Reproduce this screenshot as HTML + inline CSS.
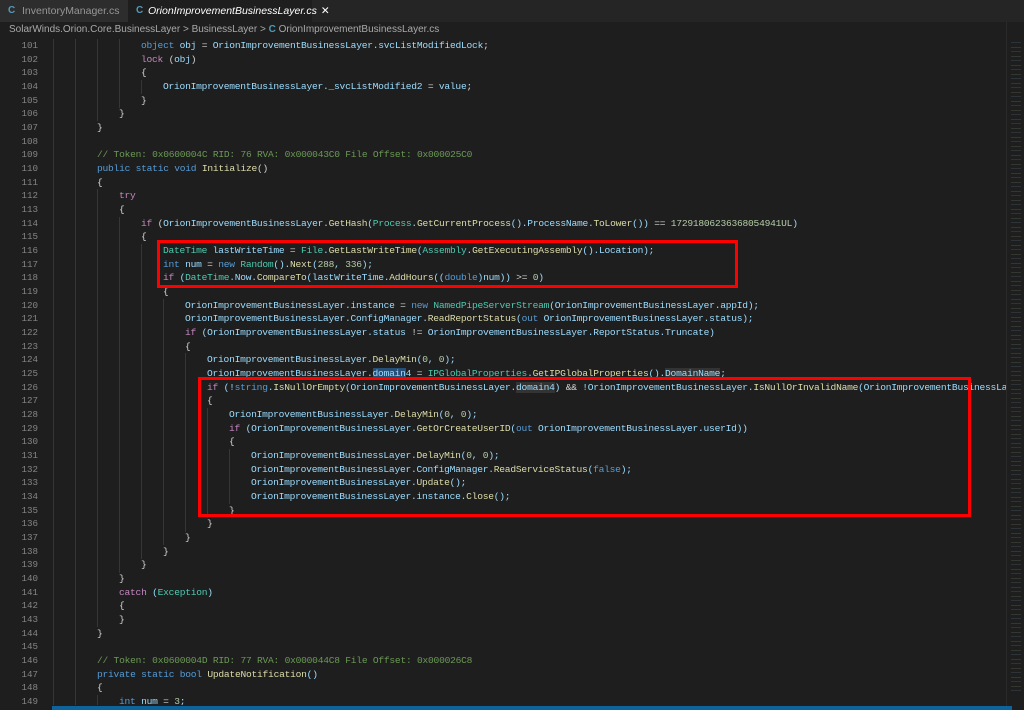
<!DOCTYPE html>
<html><head><meta charset="utf-8"><style>
*{margin:0;padding:0;box-sizing:border-box}
body{width:1024px;height:710px;background:#1e1e1e;overflow:hidden;position:relative;font-family:"Liberation Sans",sans-serif}
.tabs{position:absolute;left:0;top:0;width:1024px;height:22px;background:#252526}
.tab{position:absolute;top:0;height:22px;font-size:10.5px;line-height:22px;color:#969696;padding-left:22px;white-space:nowrap}
.tab i{position:absolute;left:8px;top:0;color:#519aba;font-style:normal;font-weight:bold;font-size:10px}
.crumb{position:absolute;left:0;top:22px;width:1024px;height:16px;background:#1e1e1e;font-size:10px;line-height:16px;color:#a9a9a9;padding-left:9px}
.code{position:absolute;left:0;top:39px;width:1006px;height:666px;overflow:hidden}
.ln{position:absolute;left:0;width:38px;text-align:right;font-family:"Liberation Mono",monospace;font-size:9.2px;line-height:13.667px;color:#858585}
.l{position:absolute;white-space:pre;font-family:"Liberation Mono",monospace;font-size:9.6px;letter-spacing:-0.24px;line-height:13.667px;color:#9cdcfe}
.k{color:#569cd6}.c{color:#c586c0}.t{color:#4ec9b0}.f{color:#dcdcaa}.n{color:#b5cea8}.m{color:#6a9955}.p{color:#d4d4d4}
.g{position:absolute;width:1px;background:#363636}
.box{position:absolute;border:3px solid #f00}
.mini{position:absolute;left:1006px;top:22px;width:18px;height:684px;background:#1e1e1e;border-left:1px solid #2a2a2a}
</style></head><body>
<div class="tabs">
<div class="tab" style="left:0;width:128px;background:#2d2d2d"><i>C</i>InventoryManager.cs</div>
<div class="tab" style="left:128px;width:184px;background:#1e1e1e;color:#fff;font-style:italic;padding-left:20px"><i>C</i>OrionImprovementBusinessLayer.cs<span style="font-style:normal;margin-left:4px">✕</span></div>
</div>
<div class="crumb">SolarWinds.Orion.Core.BusinessLayer &gt; BusinessLayer &gt; <span style="color:#519aba;font-weight:bold">C</span> OrionImprovementBusinessLayer.cs</div>
<div class="code" id="code"></div>
<div class="mini">
<div style="position:absolute;left:4px;top:20px;width:10px;height:650px;background:repeating-linear-gradient(#3a4a55 0 1px,#1e1e1e 1px 5px,#4a5040 5px 6px,#1e1e1e 6px 9px);opacity:.5"></div>
</div>
<div style="position:absolute;left:52px;top:706px;width:960px;height:4px;background:#0e639c"></div>
<div class="box" style="left:157px;top:240px;width:581px;height:48px"></div>
<div class="box" style="left:198px;top:377px;width:773px;height:140px"></div>
<script>
const L=[
[4,'<span class="k">object</span> obj <span class="p">=</span> OrionImprovementBusinessLayer.svcListModifiedLock<span class="p">;</span>'],
[4,'<span class="c">lock</span> <span class="p">(</span>obj<span class="p">)</span>'],
[4,'<span class="p">{</span>'],
[5,'OrionImprovementBusinessLayer._svcListModified2 <span class="p">=</span> value<span class="p">;</span>'],
[4,'<span class="p">}</span>'],
[3,'<span class="p">}</span>'],
[2,'<span class="p">}</span>'],
[2,''],
[2,'<span class="m">// Token: 0x0600004C RID: 76 RVA: 0x000043C0 File Offset: 0x000025C0</span>'],
[2,'<span class="k">public static void</span> <span class="f">Initialize</span><span class="p">()</span>'],
[2,'<span class="p">{</span>'],
[3,'<span class="c">try</span>'],
[3,'<span class="p">{</span>'],
[4,'<span class="c">if</span> <span class="p">(</span>OrionImprovementBusinessLayer.<span class="f">GetHash</span>(<span class="t">Process</span>.<span class="f">GetCurrentProcess</span>().ProcessName.<span class="f">ToLower</span>()) <span class="p">==</span> <span class="n">17291806236368054941UL</span>)'],
[4,'<span class="p">{</span>'],
[5,'<span class="t">DateTime</span> lastWriteTime <span class="p">=</span> <span class="t">File</span>.<span class="f">GetLastWriteTime</span>(<span class="t">Assembly</span>.<span class="f">GetExecutingAssembly</span>().Location);'],
[5,'<span class="k">int</span> num <span class="p">=</span> <span class="k">new</span> <span class="t">Random</span>().<span class="f">Next</span>(<span class="n">288</span>, <span class="n">336</span>);'],
[5,'<span class="c">if</span> (<span class="t">DateTime</span>.Now.<span class="f">CompareTo</span>(lastWriteTime.<span class="f">AddHours</span>((<span class="k">double</span>)num)) <span class="p">&gt;=</span> <span class="n">0</span>)'],
[5,'<span class="p">{</span>'],
[6,'OrionImprovementBusinessLayer.instance <span class="p">=</span> <span class="k">new</span> <span class="t">NamedPipeServerStream</span>(OrionImprovementBusinessLayer.appId);'],
[6,'OrionImprovementBusinessLayer.ConfigManager.<span class="f">ReadReportStatus</span>(<span class="k">out</span> OrionImprovementBusinessLayer.status);'],
[6,'<span class="c">if</span> (OrionImprovementBusinessLayer.status <span class="p">!=</span> OrionImprovementBusinessLayer.ReportStatus.Truncate)'],
[6,'<span class="p">{</span>'],
[7,'OrionImprovementBusinessLayer.<span class="f">DelayMin</span>(<span class="n">0</span>, <span class="n">0</span>);'],
[7,'OrionImprovementBusinessLayer.<span style="background:#264f78">domain</span>4 <span class="p">=</span> <span class="t">IPGlobalProperties</span>.<span class="f">GetIPGlobalProperties</span>().<span style="background:#333">DomainName</span>;'],
[7,'<span class="c">if</span> (!<span class="k">string</span>.<span class="f">IsNullOrEmpty</span>(OrionImprovementBusinessLayer.<span style="background:#333">domain4</span>) <span class="p">&amp;&amp;</span> !OrionImprovementBusinessLayer.<span class="f">IsNullOrInvalidName</span>(OrionImprovementBusinessLayer.domain4'],
[7,'<span class="p">{</span>'],
[8,'OrionImprovementBusinessLayer.<span class="f">DelayMin</span>(<span class="n">0</span>, <span class="n">0</span>);'],
[8,'<span class="c">if</span> (OrionImprovementBusinessLayer.<span class="f">GetOrCreateUserID</span>(<span class="k">out</span> OrionImprovementBusinessLayer.userId))'],
[8,'<span class="p">{</span>'],
[9,'OrionImprovementBusinessLayer.<span class="f">DelayMin</span>(<span class="n">0</span>, <span class="n">0</span>);'],
[9,'OrionImprovementBusinessLayer.ConfigManager.<span class="f">ReadServiceStatus</span>(<span class="k">false</span>);'],
[9,'OrionImprovementBusinessLayer.<span class="f">Update</span>();'],
[9,'OrionImprovementBusinessLayer.instance.<span class="f">Close</span>();'],
[8,'<span class="p">}</span>'],
[7,'<span class="p">}</span>'],
[6,'<span class="p">}</span>'],
[5,'<span class="p">}</span>'],
[4,'<span class="p">}</span>'],
[3,'<span class="p">}</span>'],
[3,'<span class="c">catch</span> (<span class="t">Exception</span>)'],
[3,'<span class="p">{</span>'],
[3,'<span class="p">}</span>'],
[2,'<span class="p">}</span>'],
[2,''],
[2,'<span class="m">// Token: 0x0600004D RID: 77 RVA: 0x000044C8 File Offset: 0x000026C8</span>'],
[2,'<span class="k">private static bool</span> <span class="f">UpdateNotification</span>()'],
[2,'<span class="p">{</span>'],
[3,'<span class="k">int</span> num <span class="p">=</span> <span class="n">3</span>;']
];
let h='';const LH=13.667;
for(let g=0;g<2;g++)h+=`<div class="g" style="left:${53+g*22}px;top:0;height:666px"></div>`;
L.forEach((r,i)=>{
 const y=i*LH;
 h+=`<div class="ln" style="top:${y}px">${101+i}</div>`;
 for(let g=2;g<r[0];g++){ if(r[1]!=='' )h+=`<div class="g" style="left:${53+g*22}px;top:${y}px;height:${LH+0.5}px"></div>`;}
 h+=`<div class="l" style="left:${53+r[0]*22}px;top:${y}px">${r[1]}</div>`;
});
document.getElementById('code').innerHTML=h;
</script>
</body></html>
